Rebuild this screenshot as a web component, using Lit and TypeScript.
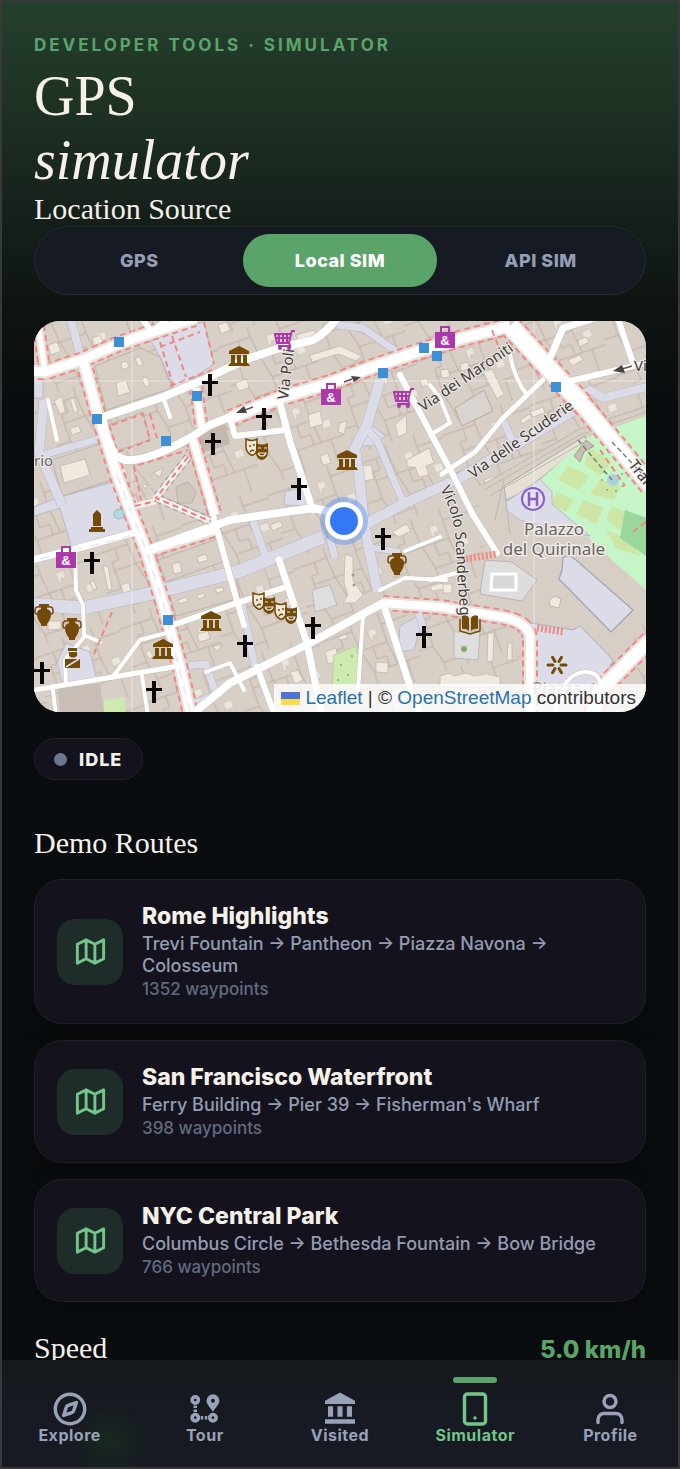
import { LitElement, html, svg, css } from "lit";
import { customElement, state } from "lit/decorators.js";

interface Road {
  d: string;
  w: number;
}

const walks: Road[] = [
  { d: "M70 316L82 362", w: 8 },
  { d: "M44 400L39 452L62 505", w: 9 },
  { d: "M40 456L105 437", w: 7 },
  { d: "M337 325L363 328L397 352L404 360", w: 7 },
  { d: "M380 380L367 425L355 448L360 482L363 515L368 545L378 592", w: 10 },
  { d: "M367 430L377 440L403 502", w: 7 },
  { d: "M366 524L403 504L460 478L573 411", w: 10 },
  { d: "M583 394L590 390L603 398L650 386", w: 8 },
  { d: "M28 604L83 608L153 593L240 571L323 537", w: 13 },
  { d: "M253 521L267 560", w: 7 },
  { d: "M330 538L335 558", w: 7 },
  { d: "M241 600L255 667", w: 7 },
  { d: "M367 547L400 552", w: 6 },
  { d: "M418 610L424 632", w: 7 },
  { d: "M175 667L206 664L216 695L190 705", w: 7 },
  { d: "M503 420L512 440", w: 7 },
];

const dashedRoads: Road[] = [
  { d: "M28 371L45 372L82 360L116 345L147 334L196 318", w: 9 },
  { d: "M83 360L97 411L117 475L130 510L147 553L163 603L180 667L191 716", w: 9 },
  { d: "M193 440L215 515", w: 7 },
  { d: "M230 418L280 398L330 383L370 368L417 352L463 338L510 326", w: 10 },
  { d: "M510 326L543 362L582 404", w: 16 },
  { d: "M582 404L612 440L650 486", w: 14 },
  { d: "M383 603L440 607L502 617Q530 622 530 640L530 716", w: 8 },
  { d: "M650 640L600 690L592 716", w: 12 },
  { d: "M150 551L217 530", w: 6 },
  { d: "M196 388L202 430", w: 6 },
  { d: "M37 316L45 372", w: 5 },
];

const roads: Road[] = [
  { d: "M103 417L163 397L203 380L230 367L250 358L280 348L313 340Q326 333 337 318", w: 8 },
  { d: "M103 420Q110 462 130 460Q150 460 190 438L210 425L235 415", w: 8 },
  { d: "M210 505L233 587L244 625M257 667L275 716", w: 6 },
  { d: "M280 403L290 442L313 510", w: 7 },
  { d: "M230 418L235 436L285 430", w: 6 },
  { d: "M147 550L230 520L313 508L332 512", w: 8 },
  { d: "M400 375L437 445L453 475L473 515L497 553", w: 6 },
  { d: "M510 355Q515 380 527 395", w: 4 },
  { d: "M430 435L450 423L440 398L430 385", w: 4 },
  { d: "M442 474L475 452L503 418L543 380", w: 5 },
  { d: "M547 365L563 328L595 318", w: 7 },
  { d: "M570 381L617 370L650 362M617 316L634 366", w: 6 },
  { d: "M383 603L310 643L230 683L190 716", w: 8 },
  { d: "M383 603L407 677L420 716", w: 7 },
  { d: "M279 560L307 643L322 716", w: 7 },
  { d: "M173 625L237 603L283 588", w: 6 },
  { d: "M28 561L75 549L133 533", w: 7 },
  { d: "M28 691L83 682L173 667", w: 5 },
  { d: "M53 690L56 716M142 676L148 716", w: 4 },
  { d: "M75 550L76 590L83 605L84 635L100 642M84 637L65 660L66 685", w: 4 },
  { d: "M163 397L170 417", w: 4 },
  { d: "M48 400L57 440", w: 4 },
  { d: "M112 678L140 640L170 632", w: 4 },
  { d: "M380 590L405 578L446 580M405 551L440 537", w: 4 },
  { d: "M363 616L358 690", w: 4 },
  { d: "M430 580L460 572M206 672L230 663L244 690", w: 4 },
  { d: "M140 316L152 332L170 316", w: 6 },
  { d: "M555 716Q560 674 585 672Q600 672 600 686", w: 4 },
];

const courts = [
  "M48 345l9-3 4 9-10 4z", "M92 338l8-3 3 7-9 4z", "M116 383l10-3 4 12-12 4z", "M121 363l6-2 2 6-7 3z",
  "M135 358l5-1 3 8-5 1z", "M142 378l5-1 3 8-5 2z", "M218 325l9-3 3 8-9 4z", "M54 401l8-5 3 16-5 2z",
  "M70 399l4-1 4 13-4 2z", "M60 466l25-7 5 16-26 8z", "M70 428l9-2 2 6-9 3z", "M153 473l10-5-3 9z",
  "M142 485l5-1-1 5z", "M172 564l8-2 2 10-8 2z", "M197 557l9-3 2 6-9 3z", "M178 600l8-3 2 4-8 3z",
  "M197 595l7-2 1 4-7 2z", "M215 589l7-2 2 4-7 2z", "M121 585l8-3 2 9-8 3z", "M103 566l5 0 4 23-4 1z",
  "M90 582l4-1 3 8-4 1z", "M197 634l11-3 2 8-11 3z", "M212 647l10-3-4 7z", "M48 621l13 0 0 8-13 1z",
  "M235 383l12-4 2 9-10 3z", "M310 355l30-9 22 10-6 5-18-7-26 8z", "M308 415l12-4 3 13-13 4z",
  "M340 423l7-2-3 13-6-2z", "M320 456l8-3 3 10-8 2z", "M362 466l9-1 3 14-10 2z", "M395 425l11-10 1 18-9 4z",
  "M407 460l22-12 5 15-8 3 3 9-10 2-4-10-8 0z", "M345 554l8 3 0 23 10 15-8 8-12 0 5-8-4-12z",
  "M420 380l6-2 4 7-8 2z", "M440 370l8-1 2 8-8 1z", "M460 364l8-2 1 7-8 2z", "M483 372l9-3 12 25-7 5z",
  "M568 360l12-5 3 5-11 6z", "M578 340l8-3 3 5-10 5z", "M520 420l10-6 2 4-10 6z",
  "M530 412l13-5 2 6-12 4z", "M484 480l10-4 9 25-12 4z", "M325 652l11-4 3 12-11 4z",
  "M290 672l8-2 5 10-8 4z", "M338 637l8-3 2 4-8 2z", "M376 662l12 1 0 10-12-1z", "M488 633l6 0-1 28-6 1z",
  "M508 643l4 0 0 17-5 0z", "M430 586l13-3 2 6-13 2z", "M443 584l9 0 0 9-9 0z", "M549 600l6-4 6 3-2 9-9-2z",
  "M392 532l14-8 5 7-12 6z", "M270 525l10-4 3 5-10 5z", "M440 676l10-3 4 3 12-3 8 3 12-2 14 3 0 10-60 0z",
  "M150 659l-4-5 3-5 4 7z", "M296 335l18-5 2 5-17 5z",
];

const crosses = [
  [210, 385], [213, 444], [264, 419], [299, 489], [383, 539], [313, 628],
  [245, 646], [424, 637], [92, 563], [42, 673], [154, 692],
];
const museums = [[239, 357], [347, 461], [211, 622], [163, 650]];
const stops = [
  [119, 342], [97, 419], [197, 396], [166, 441], [168, 620], [383, 373], [424, 348], [437, 356], [556, 387],
];
const bags = [[331, 395], [445, 338], [66, 558]];
const carts = [[284, 340], [403, 398]];
const masks = [[257, 449], [264, 603], [286, 613]];
const urns = [[44, 615], [72, 629], [397, 564]];

const at = (p: number[]) => `translate(${p[0]} ${p[1]})`;

@customElement("city-map")
class CityMap extends LitElement {
  static styles = css`
    :host {
      display: block;
    }
    .map {
      position: relative;
      aspect-ratio: 612 / 391;
      overflow: hidden;
      border-radius: 26px;
      background: #d9d0c9;
    }
    .tiles {
      display: block;
      width: 100%;
      height: 100%;
    }
    .street {
      font-family: "Noto Sans", sans-serif;
      font-size: 15px;
      fill: #3b3b3b;
      stroke: #efeae4;
      stroke-width: 2px;
      paint-order: stroke;
    }
    .place {
      font-family: "Noto Sans", sans-serif;
      font-size: 17px;
      fill: #666;
      stroke: #efeae4;
      stroke-width: 3px;
      paint-order: stroke;
      text-anchor: middle;
    }
    .glyph {
      font-family: "Liberation Sans", sans-serif;
      font-weight: 700;
      font-size: 13px;
      text-anchor: middle;
      fill: #fff;
    }
    .credit {
      position: absolute;
      right: 0;
      bottom: 0;
      display: flex;
      align-items: center;
      gap: 5px;
      padding: 0 10px 0 7px;
      background: rgba(255, 255, 255, 0.8);
      color: #333;
      font: 19px/28px "Liberation Sans", Arial, sans-serif;
      white-space: nowrap;
    }
    .credit a {
      color: #2a74a8;
      text-decoration: none;
    }
    .flag {
      width: 19px;
      height: 13px;
      background: linear-gradient(#4f72d6 50%, #fadc4b 50%);
    }
  `;

  render() {
    return html`<div class="map">
      <svg class="tiles" viewBox="34 321 612 391" preserveAspectRatio="xMidYMid slice" role="img" aria-label="Map">
        <defs>
          <pattern id="plots" width="92" height="78" patternUnits="userSpaceOnUse" patternTransform="rotate(-19)">
            <path
              d="M0 10H35V0M35 10L37 31H15V50H0M37 31H65V12H92M65 12V0M65 31L68 55H92M68 55H43V78M43 55L37 31M15 50L20 69H43M20 69V78M78 55V78M22 10V22H15V31M50 31V44H60V55"
              fill="none" stroke="#bfb1a4" stroke-width="1" />
            <path d="M50 14h8v7h-5v4h-3zM74 35h9v8h-9z" fill="#ebe5dc" stroke="#cbbfb3" stroke-width=".7" />
          </pattern>
          <path id="scanderbeg" d="M440 489Q455 515 456 545T460 612" />
        </defs>
        <rect x="34" y="321" width="612" height="391" fill="#d8cfc7" />
        <rect x="34" y="321" width="612" height="391" fill="url(#plots)" />
        <g stroke="#bcb9c6" stroke-width="1">
          <path d="M151 341L180 328L204 322L214 364L175 390L160 357z" fill="#dcdce9" />
          <path d="M34 507L57 498L113 482L132 534L72 549L60 508L34 516z" fill="#dcdce9" />
          <path d="M57 662L66 643L90 652L97 680L63 686z" fill="#dcdce9" />
          <path d="M34 376h9v22h-9z" fill="#dcdce9" />
          <path d="M400 626L424 613L414 650L398 652z" fill="#dcdce9" />
          <path d="M285 492L305 486L308 506L284 505z" fill="#dcdce9" />
          <path d="M355 445L370 424L386 436L372 446z" fill="#dcdce9" />
        </g>
        <g fill="#d7cec6" stroke="#c0b3a7">
          <path d="M95 366L140 348L160 357L172 388L106 410z" />
          <path d="M52 460L106 442L112 480L62 496z" />
          <path d="M100 428L143 412L150 440L116 451z" />
          <path d="M133 465L188 445L209 516L156 494z" />
          <path d="M158 560L220 538L228 560L166 582z" />
          <path d="M168 590L236 574L240 598L176 616z" />
          <path d="M176 487l12-5 8 10-4 11-14 0z" fill="#cfc6bd" />
        </g>
        <path d="M58 688L100 683L104 712H60z" fill="#c8beb5" />
        <path d="M196 432L226 424L230 444L204 452z" fill="#c4b8ac" />
        <path d="M455 408L484 390L493 411L462 426z" fill="#d8d4d0" stroke="#b9a999" />
        <path d="M312 590L330 585L337 605L315 612z" fill="#dedede" stroke="#bbb" />
        <path d="M454 632L480 632L478 660L454 658z" fill="#dedede" stroke="#bbb" />
        ${courts.map((d) => svg`<path d=${d} fill="#efe9e0" stroke="#c3b6a9" stroke-width=".8" />`)}
        <path d="M480 486L585 424L646 408V620L600 690L575 640L500 610L478 520z" fill="#d7cec6" />
        <path d="M485 560L512 562L537 580L522 601L480 594z" fill="#dddddd" stroke="#b9b4b0" />
        <path d="M492 574h24v16h-25z" fill="#d8d8d8" stroke="#fff" stroke-width="3" />
        <path d="M549 600l6-4 6 3-2 9-9-2z" fill="#efe9e0" stroke="#c3b6a9" />
        <path d="M504 486L585 436L586 441L541 478L526 490L506 500z" fill="#e6dfd3" stroke="#aaa" />
        <path d="M540 480L588 437L646 416V590L612 560L554 505z" fill="#c6f5c8" />
        <g fill="#cde6a5">
          <path d="M568 466L590 476L578 490L558 480zM590 448L612 462L600 476L584 464zM556 492L574 500L566 512L552 504zM600 480L622 486L614 500L590 494zM584 500L604 508L596 524L576 514zM612 506L630 514L620 530L606 520zM606 530L630 540L640 556L616 548z" />
          <path d="M612 442L646 470V484L612 448z" fill="#aedb9a" />
          <path d="M625 510l21 8v38l-26-18z" fill="#9bd79c" />
        </g>
        <circle cx="613" cy="480" r="6" fill="#aad3df" />
        <g fill="#7dad6c">
          <circle cx="602" cy="480" r="1" /><circle cx="607" cy="490" r="1" /><circle cx="616" cy="491" r="1" />
          <circle cx="623" cy="486" r="1" /><circle cx="622" cy="474" r="1" /><circle cx="604" cy="472" r="1" />
        </g>
        <path d="M574 456L586 440L594 446L584 452L580 462z" fill="#c9bcb0" stroke="#aa9a8c" />
        <path d="M506 502L540 479L552 492L552 504L590 536L560 530L520 520L506 510z" fill="#dcdce9" stroke="#bcb9c6" />
        <path d="M563 557L570 556L576 560L633 610L611 632L559 579L562 570z" fill="#dcdce9" stroke="#a9a7b3" stroke-width="1.4" />
        <path d="M525 622L573 630L580 626L613 660L600 688V716H534V640z" fill="#dcdce9" stroke="#b0aebb" />
        <path d="M334 655L356 646L360 665L356 690L332 690z" fill="#cdebb0" stroke="#b5d49b" />
        <path d="M104 700L124 697L126 716H104z" fill="#cdebb0" />
        <g fill="#7dad6c">
          <circle cx="341" cy="665" r="1" /><circle cx="352" cy="656" r="1" /><circle cx="348" cy="675" r="1" />
          <circle cx="338" cy="680" r="1" /><circle cx="464" cy="649" r="3" /><circle cx="353" cy="575" r="1.5" /><circle cx="354" cy="585" r="1.5" />
        </g>
        <g fill="none" stroke="#bdb6b0" stroke-width="1">
          <path d="M484 490L580 435L646 412M484 484L580 429L646 406M490 496L586 441M495 520L504 480M510 534L504 486" />
        </g>
        <g fill="none" stroke-linejoin="round">
          ${walks.map((r) => svg`<path d=${r.d} stroke="#b9b6c4" stroke-width=${r.w + 1} />`)}
          ${walks.map((r) => svg`<path d=${r.d} stroke="#dcdce9" stroke-width=${r.w} />`)}
          ${dashedRoads.map((r) => svg`<path d=${r.d} stroke="#ee8982" stroke-width=${r.w + 8} stroke-dasharray="6 4" />`)}
          ${dashedRoads.map((r) => svg`<path d=${r.d} stroke="#e9e1dc" stroke-width=${r.w + 4} />`)}
          ${roads.map((r) => svg`<path d=${r.d} stroke="#c9c0b8" stroke-width=${r.w + 1} />`)}
          ${dashedRoads.map((r) => svg`<path d=${r.d} stroke="#fff" stroke-width=${r.w} />`)}
          ${roads.map((r) => svg`<path d=${r.d} stroke="#fff" stroke-width=${r.w} stroke-linecap="round" />`)}
          <path d="M188 457L156 498L210 521" stroke="#999" stroke-width="8" stroke-dasharray="5 4" />
          <path d="M188 457L156 498L210 521M135 506L156 501" stroke="#f3efec" stroke-width="6" />
          <path d="M188 457L156 498L210 521M135 506L156 501" stroke="#ef7d75" stroke-width="2" stroke-dasharray="6 4" />
          <path
            d="M112 425L143 414L150 440M118 452L150 440M150 414L157 438M138 465L188 450M134 466L141 500M160 347L200 332M172 336L186 377M170 386L212 370M204 322L214 364M112 612L94 654M160 342L174 388M646 522L630 534M492 330L500 350M600 450L625 486"
            stroke="#ee8982" stroke-width="2" stroke-dasharray="6 4" />
          <path d="M466 559L497 554M537 628L564 632" stroke="#ef8a83" stroke-width="7" stroke-dasharray="2 2" />
          <path d="M117 475L147 553L163 603L190 712M40 559L130 536" stroke="#ececf2" stroke-width="2" stroke-dasharray="10 7" />
          <path d="M578 440L612 480M612 442L646 478" stroke="#777" stroke-width="1.4" stroke-dasharray="5 3" />
          <path d="M132 321V712M534 321V712M34 381H646" stroke="#fff" stroke-opacity=".5" />
        </g>
        <g stroke="#555" stroke-width="1.5" fill="#444">
          <path d="M344 382L352 379" /><path d="M361 377l-10-1 3 6z" stroke="none" />
          <path d="M253 407L245 410" /><path d="M236 413l8-7 3 7z" stroke="none" />
          <path d="M632 366L622 369" /><path d="M613 371l9-6 3 8z" stroke="none" />
        </g>
        <g class="street">
          <text transform="translate(288 400) rotate(-83)">Via Poli</text>
          <text transform="translate(423 412) rotate(-34)">Via dei Maroniti</text>
          <text transform="translate(473 479) rotate(-35)">Via delle Scuderie</text>
          <text transform="translate(628 465) rotate(52)">Traforo</text>
          <text x="634" y="371">Via</text>
          <text><textPath href="#scanderbeg">Vicolo Scanderbeg</textPath></text>
          <text x="34" y="466" fill="#666">rio</text>
        </g>
        <g class="place">
          <text x="554" y="535">Palazzo</text>
          <text x="554" y="555">del Quirinale</text>
          <text x="557" y="694" opacity=".6">Piazza</text>
        </g>
        <circle cx="119" cy="514" r="5" fill="#b5d8e2" stroke="#8fb9c4" />
        ${stops.map((p) => svg`<rect transform=${at(p)} x="-5" y="-5" width="10" height="10" fill="#3d8fd6" />`)}
        ${crosses.map(
          (p) => svg`<path transform=${at(p)} d="M-2-11H2V-4H8V-1H2V11H-2V-1H-8V-4H-2z" fill="#080808" />`
        )}
        ${museums.map(
          (p) => svg`<path transform=${at(p)} fill="#734a08"
            d="M0-11L10-6V-3H-10V-6zM-8-2h4V6h-4zM-2-2h4V6h-4zM4-2h4V6H4zM-9 6H9L11 9H-11z" />`
        )}
        ${bags.map(
          (p) => svg`<g transform=${at(p)}>
            <path d="M-4-4V-11H4V-4" fill="none" stroke="#ac39ac" stroke-width="2" />
            <rect x="-10" y="-6" width="20" height="16" fill="#ac39ac" />
            <text class="glyph" y="7">&amp;</text>
          </g>`
        )}
        ${carts.map(
          (p) => svg`<g transform=${at(p)} fill="none" stroke="#ac39ac" stroke-width="2">
            <path d="M-10-6H7L8-9H11M-9-6L-7 3H5L7-6M5 2L6 6H-6M-9-2H6M-5-6V2M-1-6V2M3-6V2" />
            <circle cx="-4" cy="8" r="1" /><circle cx="5" cy="8" r="1" />
          </g>`
        )}
        ${masks.map(
          (p) => svg`<g transform=${at(p)}>
            <path d="M-11-10Q-5-7 0-10V2Q-3 7-6 6Q-11 3-11-2z" fill="#efe7da" stroke="#734a08" stroke-width="1.500" />
            <path d="M-8-3h2M-4-4h2M-7 3Q-5 0-3 2" stroke="#734a08" stroke-width="1.500" fill="none" />
            <path d="M-1-6Q5-3 11-6V4Q10 11 4 11Q-1 9-1 4z" fill="#734a08" />
            <path d="M1-1h3M7-1h3M1 4H9Q8 7 5 7Q2 7 1 4" fill="none" stroke="#efe7da" stroke-width="1.200" />
          </g>`
        )}
        ${urns.map(
          (p) => svg`<g transform=${at(p)}>
            <path d="M-5-11H5V-9H3V-6Q7-5 7-1Q7 4 3 9V11H-3V9Q-7 4-7-1Q-7-5-3-6V-9H-5z" fill="#734a08" />
            <path d="M-3-8Q-9-9-9-5V-3Q-9-1-7-1M3-8Q9-9 9-5V-3Q9-1 7-1" fill="none" stroke="#734a08" stroke-width="1.500" />
          </g>`
        )}
        <path d="M93 514L97 510L101 514V526H93zM91 527H103V529H105V532H89V529H91z" fill="#734a08" />
        <path d="M68 648h9v3h-9zM69 652h8v4q-4 3-8 0zM65 668v-9h15v9z" fill="#734a08" />
        <path d="M66 667L79 659" stroke="#dcdce9" stroke-width="1.500" />
        <g fill="#734a08">
          <path d="M462 616Q467 614 469 618V631Q466 628 462 629zM478 616Q473 614 471 618V631Q474 628 478 629z" />
          <path d="M460 619V631L470 634L480 631V619" fill="none" stroke="#734a08" stroke-width="1.500" />
        </g>
        ${[0, 60, 120, 180, 240, 300].map(
          (a) => svg`<path transform=${`translate(557 665) rotate(${a + 30})`} d="M0-4V-9" stroke="#734a08" stroke-width="3" stroke-linecap="round" />`
        )}
        <circle cx="533" cy="499" r="11" fill="#e9e0f6" stroke="#8461c4" stroke-width="2" />
        <path d="M529 492V506M537 492V506M529 499H537" stroke="#8461c4" stroke-width="2.500" />
        <circle cx="344" cy="521" r="24" fill="#4285f4" fill-opacity=".38" />
        <circle cx="344" cy="521" r="19" fill="#fff" />
        <circle cx="344" cy="521" r="14" fill="#3478f6" />
      </svg>
      <div class="credit">
        <span class="flag"></span>
        <span><a href="#leaflet">Leaflet</a> | © <a href="#osm">OpenStreetMap</a> contributors</span>
      </div>
    </div>`;
  }
}

const mapIcon = svg`<path d="M3 7l6-3 6 3 6-3v13l-6 3-6-3-6 3V7M9 4v13M15 7v13" />`;

const tabs = [
  {
    name: "Explore",
    icon: svg`<circle cx="12" cy="12" r="9.800" /><path d="m16.240 7.760-1.804 5.411a2 2 0 0 1-1.265 1.265L7.760 16.240l1.804-5.411a2 2 0 0 1 1.265-1.265z" />`,
  },
  {
    name: "Tour",
    icon: svg`<circle cx="5.500" cy="6" r="2.100" stroke-width="2.400" /><circle cx="5.500" cy="17.800" r="2.100" stroke-width="2.400" /><circle cx="17.300" cy="17.800" r="2.100" stroke-width="2.400" />
      <path d="M5.500 9.700v5.600M9.200 17.800h5.500" stroke-dasharray="1.600 1.100" stroke-linecap="butt" />
      <path d="M17.300 2.200a4.300 4.300 0 0 1 4.300 4.300c0 2.700-2.600 4.300-4.300 7.500c-1.700-3.200-4.300-4.800-4.300-7.500a4.300 4.300 0 0 1 4.300-4.300zM17.300 5.200a1.300 1.300 0 1 0 0 2.600a1.300 1.300 0 0 0 0-2.600z" fill="currentColor" fill-rule="evenodd" stroke="none" />`,
  },
  {
    name: "Visited",
    icon: svg`<path d="M12 1L22 6.500V8.600H2V6.500zM4 10.200h3.400v7H4zM10.300 10.200h3.400v7h-3.400zM16.600 10.200H20v7h-3.400zM2 18.800h20v3H2z" fill="currentColor" stroke="none" />`,
  },
  {
    name: "Simulator",
    icon: svg`<rect x="5" y="2" width="14" height="20" rx="2" /><path d="M12 18h.010" />`,
  },
  {
    name: "Profile",
    icon: svg`<path d="M20 21v-2a4 4 0 0 0-4-4H8a4 4 0 0 0-4 4v2" /><circle cx="12" cy="7" r="4" />`,
  },
];

const routes = [
  { name: "Rome Highlights", stops: "Trevi Fountain → Pantheon → Piazza Navona → Colosseum", points: 1352 },
  { name: "San Francisco Waterfront", stops: "Ferry Building → Pier 39 → Fisherman's Wharf", points: 398 },
  { name: "NYC Central Park", stops: "Columbus Circle → Bethesda Fountain → Bow Bridge", points: 766 },
];

@customElement("app-root")
class AppRoot extends LitElement {
  @state() source = "Local SIM";
  @state() tab = "Simulator";

  static styles = css`
    :host {
      display: flex;
      flex-direction: column;
      box-sizing: border-box;
      height: 100vh;
      border: 2px solid #39393b;
      background: linear-gradient(#25402d, #1e3224 100px, #17221c 200px, #0d1312 310px, #0a0d0f 400px);
      color: #f5f0e8;
      font-family: Inter, sans-serif;
    }
    * {
      box-sizing: border-box;
    }
    button {
      margin: 0;
      border: 0;
      background: none;
      color: inherit;
      font: inherit;
      cursor: pointer;
    }
    .page {
      flex: 1;
      min-height: 0;
      overflow-y: auto;
      scrollbar-width: none;
      padding: 32px 32px 0;
    }
    .eyebrow {
      margin: 0 0 8px;
      color: #5aa469;
      font-size: 17px;
      line-height: 22px;
      font-weight: 700;
      letter-spacing: 3px;
      text-transform: uppercase;
    }
    h1,
    h2 {
      margin: 0;
      font-family: "Liberation Serif", "Times New Roman", serif;
      font-weight: 400;
    }
    h1 {
      font-size: 56px;
      line-height: 64px;
    }
    h1 em {
      display: block;
    }
    h2 {
      font-size: 30px;
      line-height: 34px;
    }
    .segments {
      display: grid;
      grid-template-columns: repeat(3, 1fr);
      gap: 6px;
      padding: 7px;
      border: 1px solid #262b30;
      border-radius: 35px;
      background: #161a22;
    }
    .segment {
      height: 53px;
      border-radius: 27px;
      color: #949eb4;
      font-size: 18px;
      font-weight: 800;
      letter-spacing: 0.5px;
    }
    .segment.on {
      background: #5aa469;
      color: #fff;
    }
    city-map {
      margin-top: 26px;
    }
    .status {
      display: inline-flex;
      align-items: center;
      gap: 12px;
      height: 42px;
      margin: 26px 0 46px;
      padding: 0 20px 0 19px;
      border: 1px solid #20212a;
      border-radius: 21px;
      background: #14131d;
      font-size: 18px;
      font-weight: 800;
      letter-spacing: 1px;
    }
    .dot {
      width: 13px;
      height: 13px;
      border-radius: 50%;
      background: #6b768f;
    }
    .routes {
      display: grid;
      gap: 16px;
      margin: 19px 0 29px;
    }
    .route {
      display: flex;
      align-items: center;
      gap: 19px;
      width: 100%;
      padding: 22px;
      border: 1px solid #202125;
      border-radius: 28px;
      background: #14131d;
      text-align: left;
      box-shadow: 0 4px 24px rgba(0, 0, 0, 0.3);
    }
    .badge {
      display: grid;
      place-items: center;
      flex: none;
      width: 66px;
      height: 66px;
      border-radius: 18px;
      background: #1f2d2a;
      color: #74c58a;
    }
    svg.line {
      display: block;
      fill: none;
      stroke: currentColor;
      stroke-width: 2;
      stroke-linecap: round;
      stroke-linejoin: round;
    }
    .info {
      display: grid;
      min-width: 0;
    }
    .name {
      margin-bottom: 3px;
      font-size: 23px;
      line-height: 28px;
      font-weight: 800;
    }
    .stops {
      margin-bottom: 1px;
      color: #939db2;
      font-size: 18px;
      line-height: 22px;
      font-weight: 500;
    }
    .points {
      color: #606b80;
      font-size: 17px;
      line-height: 23px;
      font-weight: 500;
    }
    .speed {
      display: flex;
      align-items: baseline;
      justify-content: space-between;
    }
    .value {
      color: #5aa469;
      font-size: 24px;
      line-height: 30px;
      font-weight: 800;
    }
    .tabs {
      display: grid;
      grid-template-columns: repeat(5, 1fr);
      flex: none;
      height: 107px;
      background: radial-gradient(circle 38px at 108px 82px, #18281f, rgba(24, 40, 31, 0)),
        linear-gradient(#15181c, #171a22 60%);
    }
    .tab {
      display: flex;
      flex-direction: column;
      align-items: center;
      padding: 17px 0 0;
      color: #98a2b9;
      font-size: 16px;
      line-height: 20px;
      font-weight: 700;
      letter-spacing: 0.5px;
    }
    .tab::before {
      content: "";
      width: 44px;
      height: 6px;
      margin-bottom: 8px;
      border-radius: 3px;
    }
    .tab.on {
      color: #74c58a;
    }
    .tab.on::before {
      background: #5aa469;
    }
    .tab svg {
      margin-bottom: -2px;
      stroke-width: 2.300;
    }
  `;

  render() {
    return html`
      <main class="page">
        <p class="eyebrow">Developer Tools · Simulator</p>
        <h1>GPS <em>simulator</em></h1>
        <h2>Location Source</h2>
        <div class="segments" role="group" aria-label="Location Source">
          ${["GPS", "Local SIM", "API SIM"].map(
            (s) => html`<button
              class="segment ${s === this.source ? "on" : ""}"
              aria-pressed=${s === this.source}
              @click=${() => (this.source = s)}
            >${s}</button>`
          )}
        </div>
        <city-map></city-map>
        <div class="status"><span class="dot"></span>IDLE</div>
        <h2>Demo Routes</h2>
        <div class="routes">
          ${routes.map(
            (r) => html`<button class="route">
              <span class="badge"><svg class="line" width="35" height="35" viewBox="0 0 24 24">${mapIcon}</svg></span>
              <span class="info">
                <span class="name">${r.name}</span>
                <span class="stops">${r.stops}</span>
                <span class="points">${r.points} waypoints</span>
              </span>
            </button>`
          )}
        </div>
        <div class="speed">
          <h2>Speed</h2>
          <span class="value">5.0 km/h</span>
        </div>
      </main>
      <nav class="tabs">
        ${tabs.map(
          (t) => html`<button class="tab ${t.name === this.tab ? "on" : ""}" @click=${() => (this.tab = t.name)}>
            <svg class="line" width="36" height="36" viewBox="0 0 24 24">${t.icon}</svg>
            ${t.name}
          </button>`
        )}
      </nav>
    `;
  }
}
